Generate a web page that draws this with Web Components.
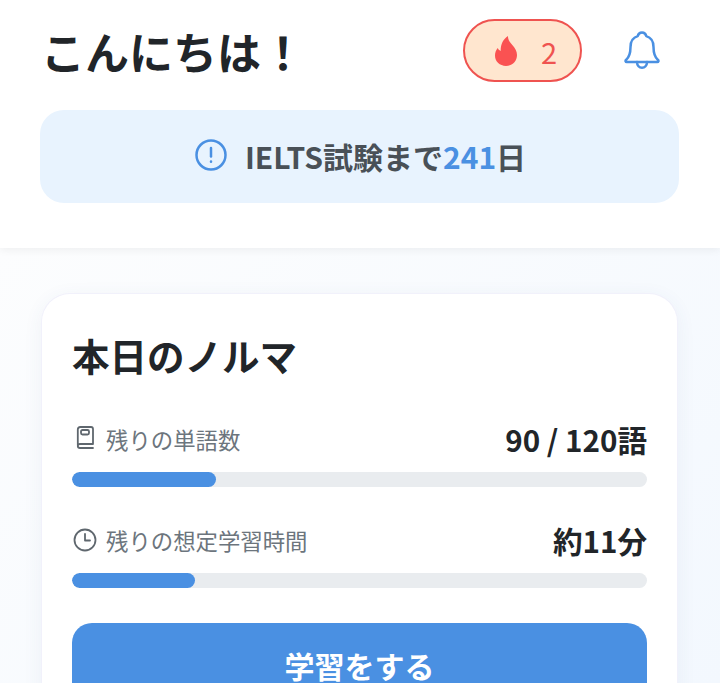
<!DOCTYPE html>
<html lang="ja">
<head>
<meta charset="utf-8">
<title>ホーム</title>
<style>
  html, body {
    margin: 0;
    height: 683px;
    overflow: hidden;
    font-family: "Noto Sans CJK JP", "Noto Sans", sans-serif;
  }
  body { background: linear-gradient(135deg, #fefefe 0%, #f3f8fe 100%); }
</style>
</head>
<body>
<home-header></home-header>
<quota-card></quota-card>

<script>
class StreakBadge extends HTMLElement {
  constructor() {
    super();
    this.attachShadow({ mode: "open" }).innerHTML = `
      <style>
      :host {
        display: flex;
        align-items: center;
        gap: 24px;
        box-sizing: border-box;
        width: 119px;
        height: 63px;
        padding-left: 30px;
        border: 2px solid #ef5350;
        border-radius: 32px;
        background: #ffe6cf;
        color: #ef5350;
        font-size: 29px;
        font-weight: 400;
      }
      svg { width: 22px; height: 30px; display: block; flex: none; }
      </style>
      <svg viewBox="0 0 22 30"><path fill="#fa5252" d="M13 0c-.2 4 2.300 6.500 4.300 9 2.700 3.200 4.700 6 4.700 10C22 25.500 17.200 30 11 30 4.800 30 0 25.600 0 19.600c0-2.800.9-5.400 2.700-7.600.5 1.200 1.300 2.200 3 3C5.500 9 8 3 13 0z"/></svg>
      <span><slot></slot></span>
    `;
  }
}
customElements.define("streak-badge", StreakBadge);

class HomeHeader extends HTMLElement {
  constructor() {
    super();
    this.attachShadow({ mode: "open" }).innerHTML = `
      <style>
      :host {
        display: block;
        box-sizing: border-box;
        height: 248px;
        padding: 19px 41px 0 40px;
        background: #fff;
        box-shadow: 0 2px 8px rgba(0, 0, 0, 0.06);
      }
      .top {
        display: flex;
        align-items: center;
        height: 63px;
      }
      h1 {
        margin: 0 0 0 1px;
        flex: 1;
        font-size: 44px;
        font-weight: 700;
        color: #212529;
      }
      .bell { margin: 0 19px 0 42px; width: 36px; height: 39px; display: block; flex: none; }
      .notice {
        display: flex;
        align-items: center;
        justify-content: center;
        gap: 17px;
        box-sizing: border-box;
        height: 93px;
        padding: 0 0 2px 1px;
        margin-top: 28px;
        border-radius: 24px;
        background: #e8f3fe;
        color: #495057;
        font-size: 30px;
        font-weight: 700;
      }
      .notice b { color: #4a90e2; font-weight: 700; }
      .notice svg { width: 34px; height: 34px; display: block; margin-bottom: 1px; }
      </style>
      <div class="top">
        <h1>こんにちは！</h1>
        <streak-badge>2</streak-badge>
        <svg class="bell" viewBox="0 0 36 39" fill="none" stroke="#4a90e2" stroke-width="2.500" stroke-linejoin="round" stroke-linecap="round">
          <path d="M18 1.500c2.200 0 3.800 1.500 4.200 3.600C27.500 6.600 29.500 11 29.500 16c0 6 1 10 4.500 13 .8.800.5 2-.7 2H2.700c-1.200 0-1.500-1.200-.7-2 3.500-3 4.500-7 4.500-13 0-5 2-9.400 7.300-10.900.4-2.100 2-3.600 4.200-3.600z"/>
          <path d="M13 31c0 3.500 2.200 5.700 5 5.700s5-2.200 5-5.700"/>
        </svg>
      </div>
      <div class="notice">
        <svg viewBox="0 0 34 34" fill="none" stroke="#4a90e2" stroke-width="2.500" stroke-linecap="round">
          <circle cx="17" cy="17" r="14.500"/>
          <path d="M17 10v8.500"/>
          <path d="M17 23.500v.2"/>
        </svg>
        <span>IELTS試験まで<b>241</b>日</span>
      </div>
    `;
  }
}
customElements.define("home-header", HomeHeader);

class QuotaRow extends HTMLElement {
  constructor() {
    super();
    this.attachShadow({ mode: "open" }).innerHTML = `
      <style>
      :host {
        display: block;
        margin-bottom: 32px;
      }
      .row {
        display: flex;
        align-items: center;
        justify-content: space-between;
        height: 42px;
        margin-bottom: 12px;
      }
      .label {
        display: flex;
        align-items: center;
        gap: 8px;
        font-size: 22.400px;
        color: #6c757d;
      }
      ::slotted(svg) { width: 26px; height: 26px; display: block; }
      .value {
        font-size: 29.600px;
        font-weight: 700;
        color: #212529;
      }
      .track {
        height: 15px;
        border-radius: 8px;
        background: #e9ecef;
        overflow: hidden;
      }
      .fill {
        height: 100%;
        border-radius: 8px;
        background: #4a90e2;
      }
      </style>
      <div class="row">
        <div class="label"><slot name="icon"></slot><span></span></div>
        <div class="value"></div>
      </div>
      <div class="track"><div class="fill"></div></div>
    `;
  }

  connectedCallback() {
    const root = this.shadowRoot;
    root.querySelector(".label span").textContent = this.getAttribute("label");
    root.querySelector(".value").textContent = this.getAttribute("value");
    root.querySelector(".fill").style.width = this.getAttribute("percent") + "%";
  }
}
customElements.define("quota-row", QuotaRow);

class QuotaCard extends HTMLElement {
  constructor() {
    super();
    this.attachShadow({ mode: "open" }).innerHTML = `
      <style>
      :host {
        display: block;
        box-sizing: border-box;
        width: 635px;
        margin: 46px 0 0 42px;
        padding: 30px 30px 30px;
        border-radius: 28px;
        background: #fff;
        box-shadow: 0 0 0 1px #f1f1fb, 0 4px 20px rgba(60, 80, 140, 0.07);
      }
      h2 {
        margin: 0 0 32px;
        font-size: 37.500px;
        line-height: 62px;
        font-weight: 700;
        color: #212529;
      }
      button {
        display: block;
        width: 100%;
        height: 84px;
        margin-top: 35px;
        border: 0;
        border-radius: 20px;
        background: #4a90e2;
        color: #fff;
        font: inherit;
        font-size: 30px;
        font-weight: 700;
      }
      </style>
      <h2>本日のノルマ</h2>
      <quota-row label="残りの単語数" value="90 / 120語" percent="25">
        <svg slot="icon" viewBox="0 0 26 26" fill="none" stroke="#5f676e" stroke-width="1.800" stroke-linejoin="round" stroke-linecap="round">
          <path d="M5.800 19V3.500c0-1.500.9-2.500 2.500-2.500H19c1.300 0 2 .8 2 2V18H8c-1.400 0-2.200 .9-2.200 2s.8 2 2.200 2h13"/>
          <rect x="9" y="4" width="8" height="4.500" rx="1.500"/>
        </svg>
      </quota-row>
      <quota-row label="残りの想定学習時間" value="約11分" percent="21.400" style="margin-bottom:0">
        <svg slot="icon" viewBox="0 0 26 26" fill="none" stroke="#5f676e" stroke-width="1.800" stroke-linecap="round" stroke-linejoin="round">
          <circle cx="13" cy="13" r="10.500"/>
          <path d="M13 7v6.500h5"/>
        </svg>
      </quota-row>
      <button>学習をする</button>
    `;
  }
}
customElements.define("quota-card", QuotaCard);
</script>
</body>
</html>
